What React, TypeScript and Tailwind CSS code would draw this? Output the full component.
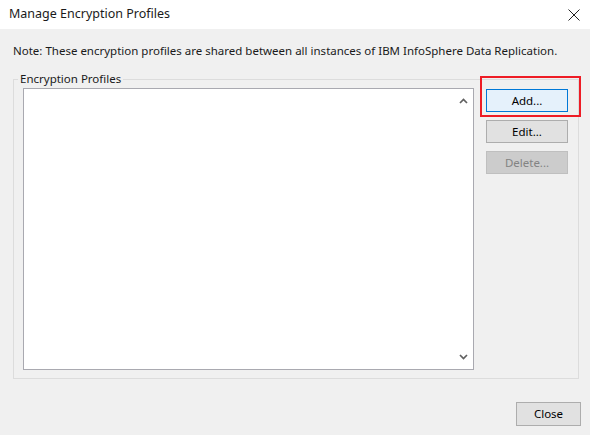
import React from "react";

const Chevron = ({ up }: { up?: boolean }) => (
  <svg width="9" height="6" viewBox="0 0 9 6" className="block">
    <path
      d={up ? "M1 5 L4.5 1.5 L8 5" : "M1 1 L4.5 4.5 L8 1"}
      fill="none"
      stroke="#606060"
      strokeWidth="1.7"
    />
  </svg>
);

const WinButton = ({
  label,
  variant = "normal",
  className = "",
}: {
  label: string;
  variant?: "normal" | "focused" | "disabled";
  className?: string;
}) => {
  const styles =
    variant === "focused"
      ? "border-[#0078d7] bg-[#e5f1fb] text-black"
      : variant === "disabled"
      ? "border-[#bfbfbf] bg-[#cccccc] text-[#838383]"
      : "border-[#adadad] bg-[#e1e1e1] text-black";
  return (
    <button
      className={`h-[23px] border text-[11.5px] leading-none flex items-center justify-center ${styles} ${className}`}
    >
      {label}
    </button>
  );
};

const App = () => {
  return (
    <div
      className="w-[590px] h-[435px] bg-[#f0f0f0] flex flex-col text-black overflow-hidden"
      style={{ fontFamily: '"Noto Sans", "Segoe UI", sans-serif' }}
    >
      {/* title bar */}
      <div className="h-[29px] bg-white flex items-center justify-between pl-[9px] pr-[10px] shrink-0">
        <span className="text-[12.5px] text-[#1a1a1a]">Manage Encryption Profiles</span>
        <svg width="12" height="12" viewBox="0 0 12 12">
          <path d="M0.5 0.5 L11.5 11.5 M11.5 0.5 L0.5 11.5" stroke="#222" strokeWidth="1" />
        </svg>
      </div>

      <p className="mt-[14px] ml-[13px] h-[16px] text-[11.5px] leading-[16px] text-[#1a1a1a]">
        Note: These encryption profiles are shared between all instances of IBM InfoSphere Data Replication.
      </p>

      {/* group box */}
      <div className="relative mt-[20px] ml-[13px] w-[566px] h-[300px] border border-[#dcdcdc] flex pl-[9px] pt-[8px]">
        <span className="absolute -top-[9px] left-[4px] bg-[#f0f0f0] px-[2px] text-[11.5px] leading-[16px] text-[#1a1a1a]">
          Encryption Profiles
        </span>
        <div className="w-[451px] h-[282px] bg-white border border-[#a9a9b0] flex justify-end">
          <div className="w-[17px] flex flex-col justify-between items-center pt-[9px] pb-[9px] mr-[1px]">
            <Chevron up />
            <Chevron />
          </div>
        </div>
        <div className="ml-[12px] pt-[1px] flex flex-col gap-[8px] relative">
          <div className="absolute -left-[6px] -top-[12px] w-[101px] h-[41px] border-2 border-[#ee1c25]" />
          <WinButton label="Add..." variant="focused" className="w-[82px]" />
          <WinButton label="Edit..." className="w-[82px]" />
          <WinButton label="Delete..." variant="disabled" className="w-[82px]" />
        </div>
      </div>

      <div className="flex justify-end mt-[23px] pr-[9px]">
        <WinButton label="Close" className="w-[65px] h-[24px]" />
      </div>
    </div>
  );
};

export default App;
